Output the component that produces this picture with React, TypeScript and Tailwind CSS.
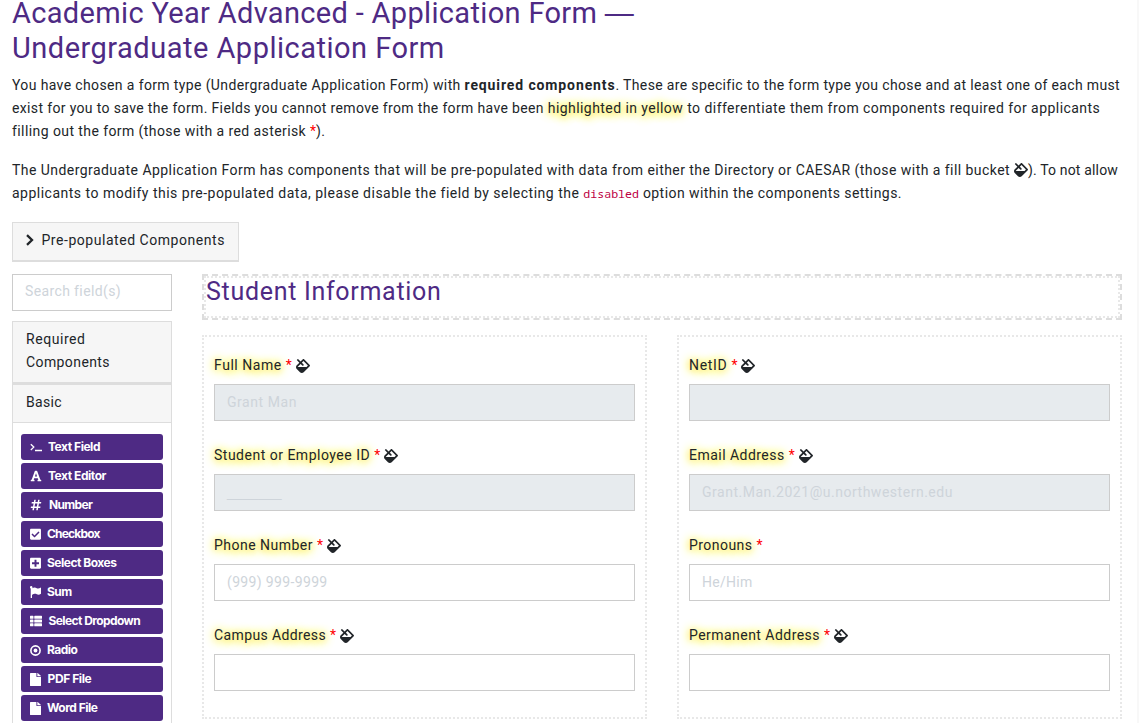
import type { ReactNode } from "react";
import { FaCheckSquare, FaFile, FaFill, FaFont, FaHashtag, FaPlusSquare, FaThList } from "react-icons/fa";

const GLOW = "[text-shadow:0_1px_8px_#ffee50,0_2px_9px_#ffee50,0_0_10px_#fff27a]";

function Bucket() {
  return <FaFill className="inline-block size-[14px] align-[-2px] text-[#212529]" />;
}

function Star() {
  return <span className="text-[#f00]">*</span>;
}

type Tool = { name: string; icon: ReactNode; tracking: string; gap: string };

const tools: Tool[] = [
  {
    name: "Text Field",
    tracking: "tracking-[-0.46px]",
    gap: "gap-[6px]",
    icon: (
      <svg viewBox="0 0 12 12" className="size-3" fill="none" stroke="currentColor" strokeWidth="1.3">
        <path d="M0.8 3.2 3.8 6.1 0.8 9M5 9.5H12" />
      </svg>
    ),
  },
  {
    name: "Text Editor",
    tracking: "tracking-[-0.45px]",
    gap: "gap-[6px]",
    icon: <FaFont className="h-3 w-3" />,
  },
  { name: "Number", tracking: "tracking-[-0.65px]", gap: "gap-[7px]", icon: <FaHashtag className="size-3" /> },
  { name: "Checkbox", tracking: "tracking-[-0.8px]", gap: "gap-[6px]", icon: <FaCheckSquare className="h-[12.5px] w-[11px]" /> },
  { name: "Select Boxes", tracking: "tracking-[-0.49px]", gap: "gap-[6px]", icon: <FaPlusSquare className="h-[12.5px] w-[11px]" /> },
  {
    name: "Sum",
    tracking: "tracking-[-0.6px]",
    gap: "gap-[6px]",
    icon: (
      <svg viewBox="0 0 11 12" className="h-3 w-[11px]" fill="currentColor">
        <circle cx="1.2" cy="1.3" r="1.2" />
        <path d="M0.7 1.5H2V12H0.7zM2 2.2C4.4 0.9 5.5 1.5 6.8 2.2S9.2 2.4 11 1.5V7.7C9.5 8.7 8.3 9 6.8 8.3S4.4 7.6 2 8.9z" />
      </svg>
    ),
  },
  { name: "Select Dropdown", tracking: "tracking-[-0.58px]", gap: "gap-[6.5px]", icon: <FaThList className="size-3" /> },
  {
    name: "Radio",
    tracking: "tracking-[-0.5px]",
    gap: "gap-[6px]",
    icon: (
      <svg viewBox="0 0 11 11" className="size-[11px]">
        <circle cx="5.5" cy="5.5" r="4.6" fill="none" stroke="currentColor" strokeWidth="1.6" />
        <circle cx="5.5" cy="5.5" r="1.9" fill="currentColor" />
      </svg>
    ),
  },
  { name: "PDF File", tracking: "tracking-[-0.4px]", gap: "gap-[6.5px]", icon: <FaFile className="h-[13px] w-[11px]" preserveAspectRatio="none" /> },
  { name: "Word File", tracking: "tracking-[-0.49px]", gap: "gap-[6px]", icon: <FaFile className="h-[13px] w-[11px]" preserveAspectRatio="none" /> },
];

type FieldProps = {
  label: string;
  tracking: string;
  bucket?: boolean;
  disabled?: boolean;
  value?: string;
  valueTracking?: string;
};

function Field({ label, tracking, bucket = true, disabled = false, value = "", valueTracking = "" }: FieldProps) {
  return (
    <div className="mb-[23px]">
      <div className="mb-[7px] flex h-[23px] items-center gap-1 whitespace-nowrap leading-[23px]">
        <span className={`${GLOW} ${tracking}`}>{label}</span>
        <Star />
        {bucket && <Bucket />}
      </div>
      <div
        className={`flex h-[37px] items-center border border-[#ccc] px-3 pb-px text-[#ced4da] ${
          disabled ? "bg-[#e7ebee]" : "bg-white"
        }`}
      >
        <span className={`whitespace-pre ${valueTracking}`}>{value}</span>
      </div>
    </div>
  );
}

export default function App() {
  return (
    <div className="flex h-[723px] w-[1139px] overflow-hidden bg-white font-['Roboto',sans-serif] text-[14px] leading-[23px] text-[#212529]">
      <main className="w-[1137px] shrink-0 px-3">
        <h1 className="-mt-1 whitespace-nowrap text-[29px] leading-[35px] text-[#4e2a84]">
          <span className="block h-[35px]">
            <span className="tracking-[0.33px]">Academic Year Advanced - Application Form </span>
            <span className="font-['Liberation_Sans',sans-serif] leading-none">—</span>
          </span>
          <span className="block tracking-[0.49px]">Undergraduate Application Form</span>
        </h1>

        <p className="mt-2 whitespace-pre">
          <span className="block">
            <span className="tracking-[0.374px]">You have chosen a form type (Undergraduate Application Form) with </span>
            <b className="font-bold tracking-[0.884px]">required components</b>
            <span className="tracking-[0.35px]">. These are specific to the form type you chose and at least one of each must</span>
          </span>
          <span className="block">
            <span className="tracking-[0.352px]">exist for you to save the form. Fields you cannot remove from the form have been </span>
            <span className={`tracking-[0.437px] ${GLOW}`}>highlighted in yellow</span>
            <span className="tracking-[0.451px]"> to differentiate them from components required for applicants</span>
          </span>
          <span className="block">
            <span className="tracking-[0.417px]">filling out the form (those with a red asterisk </span>
            <Star />
            <span className="tracking-[0.4px]">).</span>
          </span>
        </p>

        <p className="mt-4 whitespace-pre">
          <span className="block h-[23px]">
            <span className="tracking-[0.446px]">
              {"The Undergraduate Application Form has components that will be pre-populated with data from either the Directory or CAESAR (those with a fill bucket "}
            </span>
            <Bucket />
            <span className="tracking-[0.159px]">). To not allow</span>
          </span>
          <span className="block h-[23px]">
            <span className="tracking-[0.495px]">
              {"applicants to modify this pre-populated data, please disable the field by selecting the "}
            </span>
            <code className="font-['Noto_Sans_Mono','DejaVu_Sans_Mono',monospace] text-[11.6px] leading-none text-[#bd0043]">disabled</code>
            <span className="tracking-[0.44px]"> option within the components settings.</span>
          </span>
        </p>

        <button className="mt-[17px] flex h-10 w-[227px] items-center border border-b-2 border-[#ddd] bg-[#f6f6f6] pb-[3px] pl-3 text-left">
          <svg viewBox="0 0 10 12" className="mr-[6.5px] h-3 w-[10px]" fill="none" stroke="currentColor" strokeWidth="2.3">
            <path d="M2 1.2 7 6 2 10.8" />
          </svg>
          <span className="tracking-[0.54px]">Pre-populated Components</span>
        </button>

        <div className="mt-3 flex items-start gap-[30px]">
          <aside className="w-40 shrink-0">
            <div className="flex h-[37px] items-center border border-[#ccc] px-3 pb-[3px] text-[#ced4da]">
              <span className="tracking-[0.376px]">Search field(s)</span>
            </div>
            <div className="mt-[10px] h-[63px] border border-b-2 border-[#ddd] bg-[#f6f6f6] px-[13px] pt-[6px]">
              <div className="tracking-[0.553px]">Required</div>
              <div className="tracking-[0.408px]">Components</div>
            </div>
            <div className="h-[39px] border border-[#ddd] bg-[#f6f6f6] px-[13px] pt-[6px] tracking-[0.341px]">Basic</div>
            <div className="flex h-[310px] flex-col gap-[3px] border-x border-[#ddd] px-2 pt-[11px]">
              {tools.map((tool) => (
                <div
                  key={tool.name}
                  className={`flex h-[26px] shrink-0 items-center rounded-[3px] bg-[#4e2a84] pl-[9px] font-['Inter',sans-serif] text-[12px] font-bold leading-none text-white ${tool.gap}`}
                >
                  {tool.icon}
                  <span className={tool.tracking}>{tool.name}</span>
                </div>
              ))}
            </div>
          </aside>

          <section className="w-[920px] shrink-0">
            <div className="h-[46px] border-2 border-dashed border-[#ddd]">
              <div className="h-full border-2 border-dotted border-[#e8e8e8]">
                <h2 className="text-[25px] leading-7 tracking-[0.7px] text-[#4e2a84]">Student Information</h2>
              </div>
            </div>

            <div className="mt-[15px] flex justify-between">
              <div className="h-[384px] w-[445px] border-2 border-dotted border-[#e8e8e8] px-[10px] pt-[17px]">
                <Field label="Full Name" tracking="tracking-[0.55px]" disabled value="Grant Man" valueTracking="tracking-[0.557px]" />
                <Field
                  label="Student or Employee ID"
                  tracking="tracking-[0.5px]"
                  disabled
                  value="_______"
                  valueTracking="font-['Liberation_Sans',sans-serif]"
                />
                <Field label="Phone Number" tracking="tracking-[0.48px]" value="(999) 999-9999" valueTracking="tracking-[0.35px]" />
                <Field label="Campus Address" tracking="tracking-[0.38px]" />
              </div>
              <div className="h-[384px] w-[445px] border-2 border-dotted border-[#e8e8e8] px-[10px] pt-[17px]">
                <Field label="NetID" tracking="tracking-[0.68px]" disabled />
                <Field
                  label="Email Address"
                  tracking="tracking-[0.47px]"
                  disabled
                  value="Grant.Man.2021@u.northwestern.edu"
                  valueTracking="tracking-[0.52px]"
                />
                <Field label="Pronouns" tracking="tracking-[0.45px]" bucket={false} value="He/Him" valueTracking="tracking-[0.3px]" />
                <Field label="Permanent Address" tracking="tracking-[0.46px]" />
              </div>
            </div>
          </section>
        </div>
      </main>
      <div className="w-[2px] shrink-0 bg-[#f8f8f8]" />
    </div>
  );
}
